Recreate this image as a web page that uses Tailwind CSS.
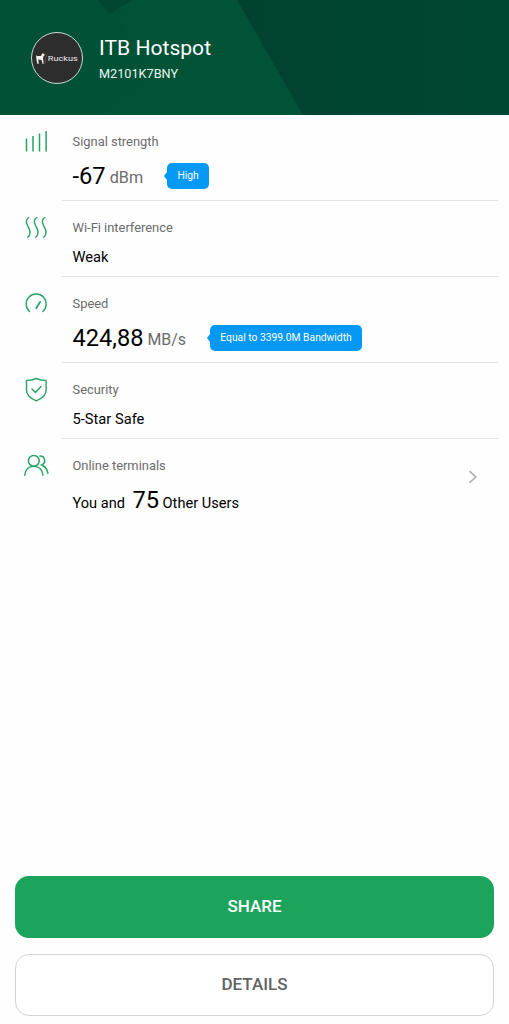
<!DOCTYPE html>
<html lang="en">
<head>
<meta charset="utf-8">
<title>ITB Hotspot</title>
<script src="https://cdn.jsdelivr.net/npm/@tailwindcss/browser@4"></script>
</head>
<body class="bg-white">
<div class="flex h-[1024px] w-[509px] flex-col overflow-hidden bg-[#fefefe] font-['Roboto',sans-serif] whitespace-nowrap">
  <header class="relative h-[115px] shrink-0 bg-[#005136]">
    <svg class="absolute inset-0" width="509" height="115" viewBox="0 0 509 115">
      <defs>
        <linearGradient id="dark" x1="0" x2="1"><stop offset="0" stop-color="#004230"/><stop offset="1" stop-color="#004733"/></linearGradient>
      </defs>
      <path d="M132 0H237L303 115H105L150 75L120 20Z" fill="#005337"/>
      <path d="M237 0H509V115H303Z" fill="url(#dark)"/>
      <path d="M98 0H132L109 14Z" fill="#004631"/>
    </svg>
    <div class="relative flex h-full items-start pt-8 pl-[31px]">
      <div class="flex size-[52px] items-center justify-center rounded-full border border-[#c8dbd2] bg-[#2e2d2e]">
        <svg width="50" height="50" viewBox="0 0 50 50">
          <path d="M4 22.3L5.2 23H9L10.3 20.3L11.8 20.8L12.9 22L11.6 23L11 25.5L11.8 30.8H10.5L9.5 27L6.3 26.5L6.8 30.8H5.2L4.5 27Z" fill="#f1efec"/>
          <path d="M13 20.5L15 22.2L13.2 25L13.8 28.5L12.8 30.8" fill="none" stroke="#826344" stroke-width=".6"/>
          <text x="15.8" y="28" textLength="30" lengthAdjust="spacingAndGlyphs" font-size="7.6" font-weight="400" fill="#ecebea" font-family="Roboto, sans-serif">Ruckus</text>
        </svg>
      </div>
      <div class="pl-4 text-[#e9f5ef]">
        <h1 class="mt-[3px] text-[21.1px] leading-[26px] text-white">ITB Hotspot</h1>
        <p class="mt-[5px] text-[12.7px] leading-4">M2101K7BNY</p>
      </div>
    </div>
  </header>

  <main class="grow text-black">
    <section class="flex h-[86px]">
      <div class="w-[62px] shrink-0 pt-[13px] pl-6">
        <svg width="24" height="26" viewBox="0 0 24 26" fill="none" stroke="#27a364" stroke-width="1.5"><path d="M2.5 10.5V23.5M9 8V23.5M15.5 5.5V23.5M22.1 3V23.5"/></svg>
      </div>
      <div class="mr-[11px] grow border-b border-[#e2e2e2] pt-[19px] pl-[10.5px]">
        <h2 class="text-[12.9px] leading-4 text-[#6b6b6b]">Signal strength</h2>
        <div class="mt-[12px] flex h-7 items-center">
          <span class="text-[23.7px] leading-7">-67</span><span class="pt-1 pl-[4px] text-[16.2px] leading-7 text-[#6b6b6b]">dBm</span>
          <svg class="ml-[21px]" width="3" height="8" viewBox="0 0 3 8"><path d="M3 0L0 4L3 8Z" fill="#0598f5"/></svg>
          <span class="h-[26px] w-[42px] rounded-[5px] bg-[#0598f5] text-center text-[10.3px] leading-[26px] text-white">High</span>
        </div>
      </div>
    </section>
    <section class="flex h-[76px]">
      <div class="w-[62px] shrink-0 pt-[13px] pl-6">
        <svg width="24" height="26" viewBox="0 0 24 26" fill="none" stroke="#27a364" stroke-width="1.4" stroke-linecap="round"><path d="M4.8 3.5C2.2 5 2 8.3 3.4 11.2C5 14.5 5.9 15.8 6 18C6.1 20.3 5.3 22 3.8 23.2"/><path d="M12.8 3.5C10.2 5 10 8.3 11.4 11.2C13 14.5 13.9 15.8 14 18C14.1 20.3 13.3 22 11.8 23.2"/><path d="M20.8 3.5C18.2 5 18 8.3 19.4 11.2C21 14.5 21.9 15.8 22 18C22.1 20.3 21.3 22 19.8 23.2"/></svg>
      </div>
      <div class="mr-[11px] grow border-b border-[#e2e2e2] pt-[19px] pl-[10.5px]">
        <h2 class="text-[12.9px] leading-4 text-[#6b6b6b]">Wi-Fi interference</h2>
        <p class="mt-[11px] text-[14.7px] leading-5">Weak</p>
      </div>
    </section>
    <section class="flex h-[86px]">
      <div class="w-[62px] shrink-0 pt-[13px] pl-6">
        <svg width="24" height="26" viewBox="0 0 24 26" fill="none" stroke="#27a364" stroke-width="1.4" stroke-linecap="round"><path d="M5.6 21.5A10 10 0 1 1 18.8 21.5"/><path d="M12.3 18.2L16.2 11.8" stroke-width="1.7"/></svg>
      </div>
      <div class="mr-[11px] grow border-b border-[#e2e2e2] pt-[19px] pl-[10.5px]">
        <h2 class="text-[12.9px] leading-4 text-[#6b6b6b]">Speed</h2>
        <div class="mt-[12px] flex h-7 items-center">
          <span class="text-[23.6px] leading-7">424,88</span><span class="pt-1 pl-[4px] text-[15.9px] leading-7 text-[#6b6b6b]">MB/s</span>
          <svg class="ml-[21px]" width="3" height="8" viewBox="0 0 3 8"><path d="M3 0L0 4L3 8Z" fill="#0598f5"/></svg>
          <span class="h-[26px] w-[152px] rounded-[5px] bg-[#0598f5] text-center text-[10.3px] leading-[26px] text-white">Equal to 3399.0M Bandwidth</span>
        </div>
      </div>
    </section>
    <section class="flex h-[76px]">
      <div class="w-[62px] shrink-0 pt-[13px] pl-6">
        <svg width="24" height="26" viewBox="0 0 24 26" fill="none" stroke="#27a364" stroke-width="1.4" stroke-linejoin="round" stroke-linecap="round"><path d="M12.3 2.5C9.5 3.8 6 4.4 2.5 4.4V14C2.5 19 6.5 22.5 12.3 24.8C18.1 22.5 22.1 19 22.1 14V4.4C18.6 4.4 15.1 3.8 12.3 2.5Z"/><path d="M8 13.1L11.4 16.4L17 10.4"/></svg>
      </div>
      <div class="mr-[11px] grow border-b border-[#e2e2e2] pt-[19px] pl-[10.5px]">
        <h2 class="text-[12.9px] leading-4 text-[#6b6b6b]">Security</h2>
        <p class="mt-[11px] text-[14.7px] leading-5">5-Star Safe</p>
      </div>
    </section>
    <section class="flex h-[86px]">
      <div class="w-[62px] shrink-0 pt-[13px] pl-6">
        <svg width="26" height="26" viewBox="0 0 26 26" fill="none" stroke="#27a364" stroke-width="1.5" stroke-linecap="round"><circle cx="9.8" cy="8.8" r="5.4"/><path d="M.8 23.2C1.2 17.6 4.8 14.2 9.8 14.2S18.4 17.6 18.9 23.2M16 4.1A4.6 4.6 0 0 1 17.7 13C21 14.6 23.4 17.3 23.9 21.3"/></svg>
      </div>
      <div class="mr-[11px] flex grow justify-between pt-[19px] pl-[10.5px]">
        <div>
          <h2 class="text-[12.9px] leading-4 text-[#6b6b6b]">Online terminals</h2>
          <p class="mt-[12px] flex items-baseline text-[14.6px] leading-7"><span>You and</span><span class="pl-[7.5px] text-[23.6px] leading-7">75</span><span class="pl-[3.5px]">Other Users</span></p>
        </div>
        <svg class="mt-[12px] mr-5" width="10" height="14" viewBox="0 0 10 14" fill="none" stroke="#b5b5b5" stroke-width="1.8"><path d="M1.5 1.2L7.8 7L1.5 12.8"/></svg>
      </div>
    </section>
  </main>

  <footer class="flex shrink-0 flex-col gap-4 pr-[15px] pb-2 pl-[15px] text-[17px] font-medium">
    <button class="h-[62px] rounded-[14px] bg-[#1ca45c] text-white">SHARE</button>
    <button class="h-[62px] rounded-[14px] border border-[#d3d3d3] bg-white text-[#626262]">DETAILS</button>
  </footer>
</div>
</body>
</html>
